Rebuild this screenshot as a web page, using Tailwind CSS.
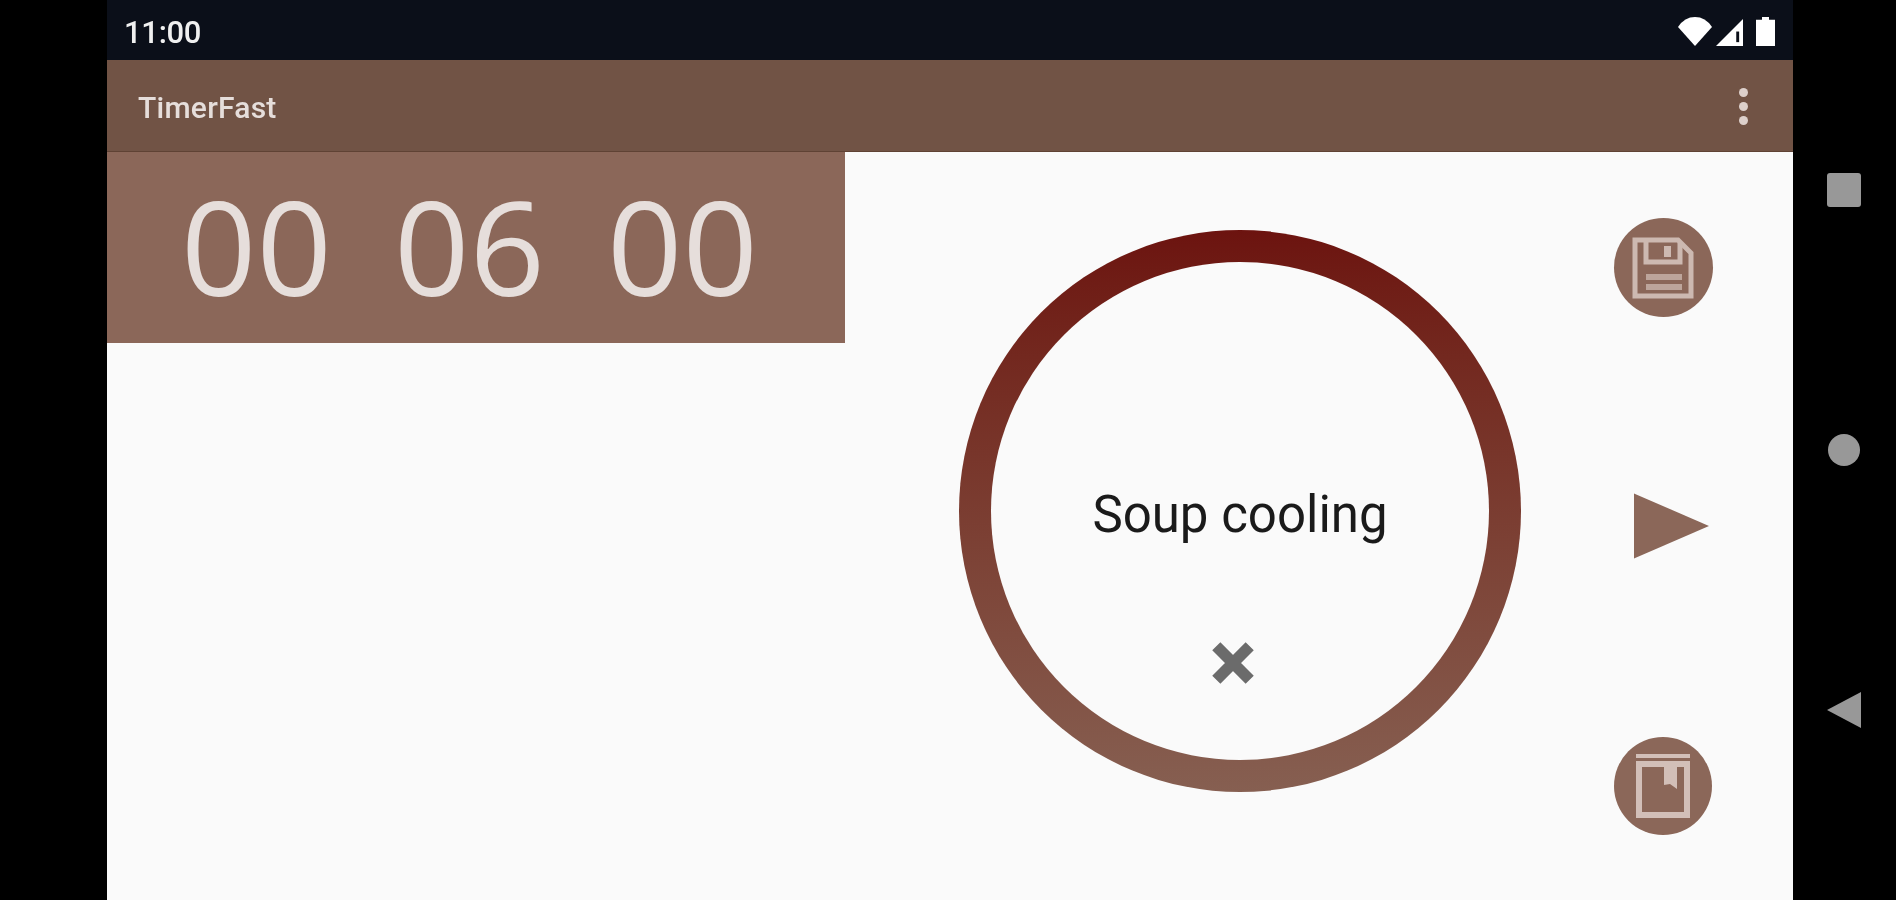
<!doctype html>
<html>
<head>
<meta charset="utf-8">
<script src="https://cdn.jsdelivr.net/npm/@tailwindcss/browser@4"></script>
</head>
<body class="bg-black overflow-hidden">
<div class="flex w-[1896px] h-[900px] bg-black font-['Roboto',sans-serif] blur-[0.6px]">
  <div class="w-[107px] shrink-0"></div>

  <div class="w-[1686px] shrink-0 flex flex-col bg-[#fafafa]">
    <div class="h-[60px] shrink-0 bg-[#0b0f19] flex items-center pl-[17px] pr-[18px] pt-[4px]">
      <span class="text-[31px] leading-none font-medium tracking-[-0.3px] text-[#f0f0f0]">11:00</span>
      <div class="ml-auto flex items-center mb-[2px]">
        <svg width="34" height="29" viewBox="0 0 36 32" preserveAspectRatio="none"><path d="M18 32 L0 11 Q7 0 18 0 Q29 0 36 11 Z" fill="#fff"/></svg>
        <svg class="ml-[4px] mt-[2px]" width="27" height="27" viewBox="0 0 28 28"><path d="M28 0 V28 H0 Z" fill="#fff"/><rect x="21" y="13" width="3" height="11" fill="#0b0f19"/></svg>
        <svg class="ml-[13px]" width="19" height="29" viewBox="0 0 19 31" preserveAspectRatio="none"><path d="M6 0 H13 V3 H19 V31 H0 V3 H6 Z" fill="#fff"/></svg>
      </div>
    </div>

    <div class="h-[92px] shrink-0 bg-[#715345] border-b border-[#5f4234] flex items-center pl-[31px] pr-[45px] pt-[5px]">
      <span class="text-[30px] leading-none font-medium tracking-[0.25px] text-[#e6dedb]">TimerFast</span>
      <div class="ml-auto flex flex-col gap-[5px] mb-[4px]">
        <span class="block w-[9px] h-[9px] rounded-full bg-[#ddd0cb]"></span>
        <span class="block w-[9px] h-[9px] rounded-full bg-[#ddd0cb]"></span>
        <span class="block w-[9px] h-[9px] rounded-full bg-[#ddd0cb]"></span>
      </div>
    </div>

    <div class="flex-1 flex items-start overflow-hidden">
      <div class="w-[738px] h-[191px] shrink-0 bg-[#8b6759] flex items-center pl-[74px] pb-[4px] gap-[62px] font-['Open_Sans',sans-serif] font-medium text-[132px] leading-none text-[#e6dedb]">
        <span class="scale-y-[0.98]">00</span>
        <span class="scale-y-[0.98]">06</span>
        <span class="scale-y-[0.98]">00</span>
      </div>

      <div class="ml-[114px] mt-[78px] w-[562px] h-[562px] shrink-0 rounded-full bg-gradient-to-b from-[#6c130f] to-[#865f51] p-[32px]">
        <div class="w-full h-full rounded-full bg-[#fafafa] flex flex-col items-center">
          <span class="mt-[223px] text-[51px] leading-[60px] text-[#1a1a1a]">Soup cooling</span>
          <svg class="mt-[94px] mr-[14px]" width="48" height="48" viewBox="0 0 46 46"><path d="M7 7 L39 39 M39 7 L7 39" stroke="#6b6b6b" stroke-width="11" fill="none"/></svg>
        </div>
      </div>

      <div class="ml-[92px] w-[100px] shrink-0 flex flex-col items-center">
        <div class="mt-[66px] w-[99px] h-[99px] rounded-full bg-[#8b6759] flex items-center justify-center">
          <svg width="62" height="62" viewBox="0 0 62 62" fill="none" stroke="#cdb9b1" stroke-width="5">
            <path d="M3 3 H46 L59 16 V59 H3 Z"/>
            <path d="M14 3 V25 H48 V6"/>
            <rect x="32" y="9" width="7" height="11" fill="#cdb9b1" stroke="none"/>
            <rect x="14" y="37" width="36" height="6" fill="#bda59b" stroke="none"/>
            <rect x="14" y="47" width="36" height="6" fill="#bda59b" stroke="none"/>
          </svg>
        </div>
        <svg class="mt-[176px] ml-[17px]" width="75" height="66" viewBox="0 0 76 66"><path d="M0 0 L76 33 L0 66 Z" fill="#8b6759"/></svg>
        <div class="mt-[178px] w-[98px] h-[98px] rounded-full bg-[#8b6759] flex items-center justify-center">
          <svg width="54" height="64" viewBox="0 0 54 64" fill="none">
            <rect x="0" y="0" width="54" height="4" fill="#d2bfb8"/>
            <rect x="3" y="10" width="48" height="51" stroke="#d2bfb8" stroke-width="6"/>
            <path d="M28 13 H41 V35 L34 30 L28 31 Z" fill="#d2bfb8"/>
          </svg>
        </div>
      </div>
    </div>
  </div>

  <div class="flex-1 flex flex-col items-center pr-[2px]">
    <div class="mt-[173px] w-[34px] h-[34px] rounded-[3px] bg-[#989898]"></div>
    <div class="mt-[227px] w-[32px] h-[32px] rounded-full bg-[#989898]"></div>
    <svg class="mt-[226px]" width="34" height="36" viewBox="0 0 34 36"><path d="M34 0 V36 L0 18 Z" fill="#989898"/></svg>
  </div>
</div>
</body>
</html>
